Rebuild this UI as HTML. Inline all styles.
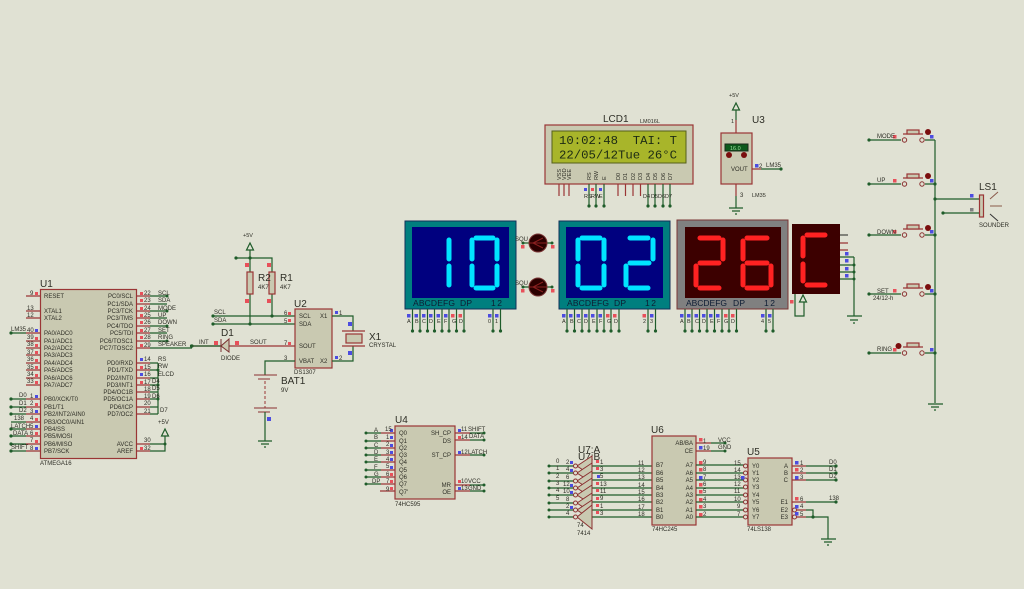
<!DOCTYPE html>
<html><head><meta charset="utf-8"><title>Schematic</title>
<style>
html,body{margin:0;padding:0;background:#e0e1d3;width:1024px;height:589px;overflow:hidden}
svg{display:block;filter:blur(.3px)}
text{font-family:"Liberation Sans",sans-serif;font-size:6px;fill:#2e2e26}
.l{font-size:10px}.s{font-size:5.500px}.m{font-size:6.500px}
.n{font-size:8.500px;fill:#0d1c33}
.w{stroke:#1f5c2a;stroke-width:1.200;fill:none}
.p{stroke:#9a3535;stroke-width:1.200;fill:none}
.b{fill:#c9c9b1;stroke:#9a3535;stroke-width:1.200}
.d{fill:#1f5c2a}
.r{fill:#e8505a}.u{fill:#4c4ce0}
.c{stroke:#00e4ff;stroke-width:5;stroke-linecap:round;fill:none}
.e{stroke:#ff2222;stroke-width:5;stroke-linecap:round;fill:none}
</style></head><body>
<svg width="1024" height="589" viewBox="0 0 1024 589" xmlns="http://www.w3.org/2000/svg">
<rect width="1024" height="589" fill="#e0e1d3"/>

<!-- U1 -->
<text class="l" x="40" y="287">U1</text>
<rect class="b" x="40.500" y="289.500" width="96" height="169"/>
<path class="p" d="M26 296H40M26 311H40M26 318H40M26 341H40M26 348H40M26 355H40M26 363H40M26 370H40M26 378H40M26 385H40M26 333H40M26 399H40M26 407H40M26 414H40M26 422H40M26 429H40M26 436H40M26 444H40M26 451H40"/>
<path class="p" d="M136 296H150M136 304H150M136 311H150M136 318H150M136 326H150M136 333H150M136 341H150M136 348H150M136 363H150M136 370H150M136 378H150M136 385H150M136 392H150M136 399H150M136 407H150M136 414H150M136 444H150M136 451H150"/>
<path class="w" d="M11 333H26M11 399H26M11 407H26M11 414H26M11 422H26M11 429H26M11 436H26M11 444H26M11 451H26"/>
<path class="w" d="M150 296H167M150 304H167M150 311H167M150 318H167M150 326H167M150 333H167M150 341H167M150 348H192M150 363H158M150 370H158M150 378H158M150 385H158M150 392H158M150 399H158M150 407H158M150 414H158M158 363V414M150 444H165V436M150 451H165V444"/>
<path class="w" d="M165 436l-3.500 0 3.500-7 3.500 7z"/>
<g class="d"><circle cx="11" cy="333" r="1.600"/><circle cx="11" cy="399" r="1.600"/><circle cx="11" cy="407" r="1.600"/><circle cx="11" cy="414" r="1.600"/><circle cx="11" cy="429" r="1.600"/><circle cx="11" cy="436" r="1.600"/><circle cx="11" cy="444" r="1.600"/><circle cx="11" cy="451" r="1.600"/><circle cx="167" cy="296" r="1.500"/><circle cx="167" cy="311" r="1.500"/><circle cx="167" cy="326" r="1.500"/><circle cx="167" cy="341" r="1.500"/><circle cx="192" cy="346" r="1.600"/><circle cx="158" cy="370" r="1.500"/><circle cx="158" cy="385" r="1.500"/><circle cx="158" cy="399" r="1.500"/><circle cx="165" cy="444" r="1.500"/></g>
<g class="r"><rect x="35" y="292" width="3" height="3"/><rect x="35" y="337" width="3" height="3"/><rect x="35" y="344" width="3" height="3"/><rect x="35" y="351" width="3" height="3"/><rect x="35" y="359" width="3" height="3"/><rect x="35" y="366" width="3" height="3"/><rect x="35" y="374" width="3" height="3"/><rect x="35" y="381" width="3" height="3"/><rect x="35" y="403" width="3" height="3"/><rect x="35" y="418" width="3" height="3"/><rect x="35" y="432" width="3" height="3"/><rect x="35" y="440" width="3" height="3"/><rect x="140" y="292" width="3" height="3"/><rect x="140" y="299" width="3" height="3"/><rect x="140" y="307" width="3" height="3"/><rect x="140" y="314" width="3" height="3"/><rect x="140" y="321" width="3" height="3"/><rect x="140" y="329" width="3" height="3"/><rect x="140" y="336" width="3" height="3"/><rect x="140" y="344" width="3" height="3"/><rect x="140" y="366" width="3" height="3"/><rect x="140" y="381" width="3" height="3"/><rect x="140" y="447" width="3" height="3"/></g>
<g class="u"><rect x="35" y="329" width="3" height="3"/><rect x="35" y="395" width="3" height="3"/><rect x="35" y="410" width="3" height="3"/><rect x="35" y="425" width="3" height="3"/><rect x="35" y="447" width="3" height="3"/><rect x="140" y="358" width="3" height="3"/><rect x="140" y="373" width="3" height="3"/></g>
<text x="44" y="298">RESET</text><text x="44" y="313">XTAL1</text><text x="44" y="320">XTAL2</text><text x="44" y="335">PA0/ADC0</text><text x="44" y="343">PA1/ADC1</text><text x="44" y="350">PA2/ADC2</text><text x="44" y="357">PA3/ADC3</text><text x="44" y="365">PA4/ADC4</text><text x="44" y="372">PA5/ADC5</text><text x="44" y="380">PA6/ADC6</text><text x="44" y="387">PA7/ADC7</text><text x="44" y="401">PB0/XCK/T0</text><text x="44" y="409">PB1/T1</text><text x="44" y="416">PB2/INT2/AIN0</text><text x="44" y="424">PB3/OC0/AIN1</text><text x="44" y="431">PB4/SS</text><text x="44" y="438">PB5/MOSI</text><text x="44" y="446">PB6/MISO</text><text x="44" y="453">PB7/SCK</text>
<g text-anchor="end"><text x="133" y="298">PC0/SCL</text><text x="133" y="306">PC1/SDA</text><text x="133" y="313">PC3/TCK</text><text x="133" y="320">PC3/TMS</text><text x="133" y="328">PC4/TDO</text><text x="133" y="335">PC5/TDI</text><text x="133" y="343">PC6/TOSC1</text><text x="133" y="350">PC7/TOSC2</text><text x="133" y="365">PD0/RXD</text><text x="133" y="372">PD1/TXD</text><text x="133" y="380">PD2/INT0</text><text x="133" y="387">PD3/INT1</text><text x="133" y="394">PD4/OC1B</text><text x="133" y="401">PD5/OC1A</text><text x="133" y="409">PD6/ICP</text><text x="133" y="416">PD7/OC2</text><text x="133" y="446">AVCC</text><text x="133" y="453">AREF</text></g>
<g><text x="30" y="295">9</text><text x="27" y="310">13</text><text x="27" y="317">12</text><text x="27" y="332">40</text><text x="27" y="339">39</text><text x="27" y="346">38</text><text x="27" y="354">37</text><text x="27" y="361">36</text><text x="27" y="369">35</text><text x="27" y="376">34</text><text x="27" y="383">33</text><text x="30" y="398">1</text><text x="30" y="405">2</text><text x="30" y="413">3</text><text x="30" y="420">4</text><text x="30" y="428">5</text><text x="30" y="435">6</text><text x="30" y="442">7</text><text x="30" y="450">8</text>
<text x="144" y="295">22</text><text x="144" y="302">23</text><text x="144" y="310">24</text><text x="144" y="317">25</text><text x="144" y="324">26</text><text x="144" y="332">27</text><text x="144" y="339">28</text><text x="144" y="347">29</text><text x="144" y="361">14</text><text x="144" y="369">15</text><text x="144" y="376">16</text><text x="144" y="384">17</text><text x="144" y="391">18</text><text x="144" y="398">19</text><text x="144" y="405">20</text><text x="144" y="413">21</text><text x="144" y="442">30</text><text x="144" y="450">32</text></g>
<text x="11" y="331">LM35</text><text x="19" y="397">D0</text><text x="19" y="405">D1</text><text x="19" y="412">D2</text><text x="14" y="420">138</text><text x="11" y="428">LATCH</text><text x="13" y="435">DATA</text><text x="11" y="449">SHIFT</text>
<text x="158" y="295">SCL</text><text x="158" y="302">SDA</text><text x="158" y="310">MODE</text><text x="158" y="317">UP</text><text x="158" y="324">DOWN</text><text x="158" y="332">SET</text><text x="158" y="339">RING</text><text x="158" y="346">SPEAKER</text><text x="158" y="361">RS</text><text x="158" y="368">RW</text><text x="158" y="376">ELCD</text><text x="152" y="383">D4</text><text x="152" y="390">D5</text><text x="152" y="398">D6</text><text x="160" y="412">D7</text><text x="158" y="424">+5V</text>
<text x="40" y="465">ATMEGA16</text>

<!-- U2 area -->
<text class="s" x="243" y="237">+5V</text>
<path class="w" d="M250 250l-3.500 0 3.500-7 3.500 7zM250 250V324M236 258H272V316M213 316H295M213 324H295"/>
<g class="d"><circle cx="236" cy="258" r="1.600"/><circle cx="250" cy="258" r="1.600"/><circle cx="272" cy="316" r="1.600"/><circle cx="250" cy="324" r="1.600"/><circle cx="213" cy="316" r="1.600"/><circle cx="213" cy="324" r="1.600"/><circle cx="191.500" cy="346" r="1.600"/></g>
<rect class="b" x="247" y="272" width="6" height="22"/><rect class="b" x="269" y="272" width="6" height="22"/>
<g class="r"><rect x="245" y="263" width="4" height="4"/><rect x="267" y="263" width="4" height="4"/><rect x="245" y="299" width="4" height="4"/><rect x="267" y="299" width="4" height="4"/><rect x="214" y="341" width="4" height="4"/><rect x="235" y="341" width="4" height="4"/><rect x="288" y="312" width="3" height="3"/><rect x="288" y="319" width="3" height="3"/><rect x="288" y="342" width="3" height="3"/></g>
<text class="l" x="258" y="281">R2</text><text class="l" x="280" y="281">R1</text><text x="258" y="289">4K7</text><text x="280" y="289">4K7</text>
<text class="l" x="294" y="307">U2</text>
<rect class="b" x="295" y="309" width="37" height="59"/>
<path class="p" d="M230 346H295M192 346H221M229 346H240"/>
<path class="w" d="M192 346H221M295 361H265V375M332 316H353V331M332 361H353V346"/>
<path d="M221 339V352M229 339V352L221 346Z" fill="#c9c9b1" stroke="#7a3030"/>
<text class="l" x="221" y="336">D1</text><text x="221" y="360">DIODE</text><text x="199" y="344">INT</text><text x="250" y="344">SOUT</text>
<text x="299" y="318">SCL</text><text x="299" y="326">SDA</text><text x="299" y="348">SOUT</text><text x="299" y="363">VBAT</text><text x="320" y="318">X1</text><text x="320" y="363">X2</text>
<text x="284" y="315">6</text><text x="284" y="323">5</text><text x="284" y="345">7</text><text x="284" y="360">3</text><text x="339" y="315">1</text><text x="339" y="360">2</text><text x="294" y="374">DS1307</text>
<g class="u"><rect x="335" y="311" width="3" height="3"/><rect x="335" y="356" width="3" height="3"/><rect x="348" y="322" width="4" height="4"/><rect x="348" y="351" width="4" height="4"/><rect x="267" y="417" width="4" height="4"/></g>
<path class="p" d="M342 331H365M342 346H365"/><rect class="b" x="346" y="334" width="16" height="9"/>
<text class="l" x="369" y="340">X1</text><text x="369" y="347">CRYSTAL</text>
<path d="M254 375H277M258 379H270M254 408H277M258 412H270" stroke="#8a3030" fill="none"/>
<path d="M265 381V408" stroke="#9a3535" stroke-dasharray="3 2"/>
<path class="w" d="M265 412V441M258 441H272M261 444H269M264 447H266"/>
<text class="l" x="281" y="384">BAT1</text><text x="281" y="392">9V</text>
<text x="214" y="314">SCL</text><text x="214" y="322">SDA</text>

<!-- Displays -->
<rect x="405" y="221" width="111" height="88" fill="#007f7f" stroke="#12305a"/>
<rect x="412" y="227" width="97" height="71" fill="#00007f"/>
<path class="c" d="M449 240V259M449 266V285M472 240V259M472 266V285M497 240V259M497 266V285M476 238H493M476 288H493"/>
<text class="n" x="413" y="306" textLength="42">ABCDEFG</text><text class="n" x="460" y="306" textLength="12">DP</text><text class="n" x="491" y="306" textLength="11">12</text>
<rect x="559" y="221" width="111" height="88" fill="#007f7f" stroke="#12305a"/>
<rect x="566" y="227" width="97" height="71" fill="#00007f"/>
<path class="c" d="M578 240V259M578 266V285M604 240V259M604 266V285M582 238H600M582 288H600M630 238H648M653 240V259M630 263H649M626 266V285M630 288H648"/>
<text class="n" x="567" y="306" textLength="42">ABCDEFG</text><text class="n" x="614" y="306" textLength="12">DP</text><text class="n" x="645" y="306" textLength="11">12</text>
<rect x="677" y="220" width="111" height="89" fill="#808080" stroke="#7a3535"/>
<rect x="685" y="227" width="96" height="71" fill="#3c0000"/>
<path class="e" d="M700 238H719M723 240V259M700 263H719M696 266V285M700 288H719M743 241V259M743 266V285M747 238H767M747 263H767M771 266V285M747 288H767"/>
<text class="n" x="686" y="306" textLength="41">ABCDEFG</text><text class="n" x="733" y="306" textLength="12">DP</text><text class="n" x="764" y="306" textLength="11">12</text>
<rect x="792" y="224" width="48" height="70" fill="#3c0000"/>
<path class="e" d="M807 235H825M803 238V256M803 264V281M807 285H825"/>
<path class="p" d="M840 243H848M840 250H848"/><path d="M840 235H848" stroke="#222"/>
<path class="w" d="M840 257H854M840 265H854M840 272H854M840 279H854M854 257V316M847 316H862M850 320H858M853 323H855M795 294V316H804V302"/>
<path class="w" d="M803 302h-3.500l3.500-7 3.500 7z"/>
<g class="d"><circle cx="854" cy="265" r="1.500"/><circle cx="854" cy="272" r="1.500"/><circle cx="854" cy="279" r="1.500"/></g>
<g class="u"><rect x="845" y="252" width="3.500" height="3.500"/><rect x="845" y="259" width="3.500" height="3.500"/><rect x="845" y="267" width="3.500" height="3.500"/><rect x="845" y="274" width="3.500" height="3.500"/></g>
<rect class="r" x="790" y="300" width="3.500" height="3.500"/>
<!-- Display pins -->
<path class="w" d="M412.500 309V331M420 309V331M427.500 309V331M434.500 309V331M442 309V331M449 309V331M456.500 309V331M464 309V331M493 309V331M500.500 309V331M567 309V331M574.500 309V331M582 309V331M589 309V331M597 309V331M604 309V331M611 309V331M619 309V331M648 309V331M655.500 309V331M685 309V331M692 309V331M699.500 309V331M707 309V331M714.500 309V331M722 309V331M729 309V331M736.500 309V331M766 309V331M773 309V331"/>
<g class="d"><circle cx="412.500" cy="331" r="1.600"/><circle cx="420" cy="331" r="1.600"/><circle cx="427.500" cy="331" r="1.600"/><circle cx="434.500" cy="331" r="1.600"/><circle cx="442" cy="331" r="1.600"/><circle cx="449" cy="331" r="1.600"/><circle cx="456.500" cy="331" r="1.600"/><circle cx="464" cy="331" r="1.600"/><circle cx="493" cy="331" r="1.600"/><circle cx="500.500" cy="331" r="1.600"/><circle cx="567" cy="331" r="1.600"/><circle cx="574.500" cy="331" r="1.600"/><circle cx="582" cy="331" r="1.600"/><circle cx="589" cy="331" r="1.600"/><circle cx="597" cy="331" r="1.600"/><circle cx="604" cy="331" r="1.600"/><circle cx="611" cy="331" r="1.600"/><circle cx="619" cy="331" r="1.600"/><circle cx="648" cy="331" r="1.600"/><circle cx="655.500" cy="331" r="1.600"/><circle cx="685" cy="331" r="1.600"/><circle cx="692" cy="331" r="1.600"/><circle cx="699.500" cy="331" r="1.600"/><circle cx="707" cy="331" r="1.600"/><circle cx="714.500" cy="331" r="1.600"/><circle cx="722" cy="331" r="1.600"/><circle cx="729" cy="331" r="1.600"/><circle cx="736.500" cy="331" r="1.600"/><circle cx="766" cy="331" r="1.600"/><circle cx="773" cy="331" r="1.600"/></g>
<g class="u"><rect x="407" y="314" width="3.500" height="3.500"/><rect x="414.500" y="314" width="3.500" height="3.500"/><rect x="422" y="314" width="3.500" height="3.500"/><rect x="429" y="314" width="3.500" height="3.500"/><rect x="436.500" y="314" width="3.500" height="3.500"/><rect x="444" y="314" width="3.500" height="3.500"/><rect x="488" y="314" width="3.500" height="3.500"/><rect x="495" y="314" width="3.500" height="3.500"/><rect x="562" y="314" width="3.500" height="3.500"/><rect x="569" y="314" width="3.500" height="3.500"/><rect x="576.500" y="314" width="3.500" height="3.500"/><rect x="584" y="314" width="3.500" height="3.500"/><rect x="591" y="314" width="3.500" height="3.500"/><rect x="598.500" y="314" width="3.500" height="3.500"/><rect x="650" y="314" width="3.500" height="3.500"/><rect x="680" y="314" width="3.500" height="3.500"/><rect x="687" y="314" width="3.500" height="3.500"/><rect x="694.500" y="314" width="3.500" height="3.500"/><rect x="702" y="314" width="3.500" height="3.500"/><rect x="709" y="314" width="3.500" height="3.500"/><rect x="716" y="314" width="3.500" height="3.500"/><rect x="761" y="314" width="3.500" height="3.500"/><rect x="768" y="314" width="3.500" height="3.500"/></g>
<g class="r"><rect x="451" y="314" width="3.500" height="3.500"/><rect x="458.500" y="314" width="3.500" height="3.500"/><rect x="606" y="314" width="3.500" height="3.500"/><rect x="613" y="314" width="3.500" height="3.500"/><rect x="642.500" y="314" width="3.500" height="3.500"/><rect x="724" y="314" width="3.500" height="3.500"/><rect x="731" y="314" width="3.500" height="3.500"/></g>
<g class="s"><text class="s" x="407" y="323">A</text><text class="s" x="415" y="323">B</text><text class="s" x="422" y="323">C</text><text class="s" x="429" y="323">D</text><text class="s" x="437" y="323">E</text><text class="s" x="444" y="323">F</text><text class="s" x="452" y="323">G</text><text class="s" x="459" y="323">D</text><text class="s" x="488" y="323">0</text><text class="s" x="495" y="323">1</text><text class="s" x="562" y="323">A</text><text class="s" x="570" y="323">B</text><text class="s" x="577" y="323">C</text><text class="s" x="584" y="323">D</text><text class="s" x="592" y="323">E</text><text class="s" x="599" y="323">F</text><text class="s" x="607" y="323">G</text><text class="s" x="614" y="323">D</text><text class="s" x="643" y="323">2</text><text class="s" x="650" y="323">3</text><text class="s" x="680" y="323">A</text><text class="s" x="687" y="323">B</text><text class="s" x="695" y="323">C</text><text class="s" x="702" y="323">D</text><text class="s" x="710" y="323">E</text><text class="s" x="717" y="323">F</text><text class="s" x="724" y="323">G</text><text class="s" x="731" y="323">D</text><text class="s" x="761" y="323">4</text><text class="s" x="768" y="323">5</text></g>
<!-- Buzzer LEDs -->
<path class="w" d="M523 243H552M523 287H552"/>
<circle cx="538" cy="243" r="9" fill="#2b0000" stroke="#7a3535"/><circle cx="538" cy="287" r="9" fill="#2b0000" stroke="#7a3535"/>
<path d="M543 238L533 243L543 248M529 243H547M543 282L533 287L543 292M529 287H547" stroke="#8a2020" fill="none"/>
<g class="d"><circle cx="523" cy="243" r="1.500"/><circle cx="552" cy="243" r="1.500"/><circle cx="523" cy="287" r="1.500"/><circle cx="552" cy="287" r="1.500"/></g>
<g class="r"><rect x="521" y="245" width="3.500" height="3.500"/><rect x="551" y="245" width="3.500" height="3.500"/><rect x="521" y="289" width="3.500" height="3.500"/><rect x="551" y="289" width="3.500" height="3.500"/></g>
<text x="515" y="241">SQU</text><text x="515" y="285">SQU</text>

<!-- LCD -->
<text class="l" x="603" y="122">LCD1</text><text class="s" x="640" y="123">LM016L</text>
<rect class="b" x="545" y="125" width="148" height="59"/>
<rect x="552" y="131" width="134" height="32" fill="#a8b52a" stroke="#55601a"/>
<text x="559" y="144" style="font-family:'Liberation Mono',monospace;font-size:12.300px;fill:#1c2a14" textLength="118" xml:space="preserve">10:02:48  TAI: T</text>
<text x="559" y="158.500" style="font-family:'Liberation Mono',monospace;font-size:12.300px;fill:#1c2a14" textLength="118" xml:space="preserve">22/05/12Tue 26°C</text>
<g class="s"><text class="s" transform="translate(561,180) rotate(-90)">VSS</text><text class="s" transform="translate(566,180) rotate(-90)">VDD</text><text class="s" transform="translate(571,180) rotate(-90)">VEE</text><text class="s" transform="translate(591,180) rotate(-90)">RS</text><text class="s" transform="translate(598,180) rotate(-90)">RW</text><text class="s" transform="translate(606,180) rotate(-90)">E</text><text class="s" transform="translate(620,180) rotate(-90)">D0</text><text class="s" transform="translate(627,180) rotate(-90)">D1</text><text class="s" transform="translate(635,180) rotate(-90)">D2</text><text class="s" transform="translate(642,180) rotate(-90)">D3</text><text class="s" transform="translate(650,180) rotate(-90)">D4</text><text class="s" transform="translate(657,180) rotate(-90)">D5</text><text class="s" transform="translate(665,180) rotate(-90)">D6</text><text class="s" transform="translate(672,180) rotate(-90)">D7</text></g>
<path class="p" d="M559 184V196M564 184V196M569 184V196M618 184V196M625.500 184V196M633 184V196M640.500 184V196"/>
<path class="w" d="M589 184V206M596 184V206M604 184V206M648 184V206M655 184V206M663 184V206M670 184V206"/>
<g class="d"><circle cx="589" cy="206" r="1.600"/><circle cx="596" cy="206" r="1.600"/><circle cx="604" cy="206" r="1.600"/><circle cx="648" cy="206" r="1.600"/><circle cx="655" cy="206" r="1.600"/><circle cx="663" cy="206" r="1.600"/><circle cx="670" cy="206" r="1.600"/></g>
<rect class="u" x="584" y="188" width="3" height="3"/><rect class="r" x="591" y="188" width="3" height="3"/><rect class="u" x="599" y="188" width="3" height="3"/>
<g class="s"><text class="s" x="584" y="198">RS</text><text class="s" x="591" y="198">RW</text><text class="s" x="599" y="198">E</text><text class="s" x="643" y="198">D4</text><text class="s" x="651" y="198">D5</text><text class="s" x="658" y="198">D6</text><text class="s" x="665" y="198">D7</text></g>

<!-- U3 -->
<text class="s" x="729" y="97">+5V</text>
<path class="w" d="M736 110h-3.500l3.500-7 3.500 7zM736 110V120"/><path class="p" d="M736 120V133"/>
<text class="l" x="752" y="123">U3</text><text class="s" x="731" y="123">1</text>
<rect class="b" x="721" y="133" width="31" height="51"/>
<rect x="725" y="144" width="23" height="7" fill="#0d5a1c" stroke="#1a2a1a"/>
<text class="s" x="730" y="150" style="fill:#9fe09f">16.0</text>
<circle cx="729" cy="155" r="3" fill="#7a0e0e"/><circle cx="744" cy="155" r="3" fill="#7a0e0e"/>
<text x="731" y="171">VOUT</text>
<path class="p" d="M752 169H761M736 184V196"/><path class="w" d="M761 169H781M736 196V208M729 208H743M732 211H740M735 214H737"/>
<circle class="d" cx="781" cy="169" r="1.600"/>
<rect class="u" x="755" y="164" width="3.500" height="3.500"/>
<text x="759" y="168">2</text><text x="766" y="167">LM35</text><text x="740" y="197">3</text><text class="s" x="752" y="197">LM35</text>

<!-- Switches -->
<path class="w" d="M935 140V403M928 404H943M931 407H939M934 410H936M869 140H901M869 184H901M869 235H901M869 294H901M869 353H901M925 140H935M925 184H935M925 235H935M925 294H935M925 353H935M935 199H979M943 213H979"/>
<g fill="#e0e1d3" stroke="#8a3030"><circle cx="904.500" cy="140" r="2.200"/><circle cx="922" cy="140" r="2.200"/><circle cx="904.500" cy="184" r="2.200"/><circle cx="922" cy="184" r="2.200"/><circle cx="904.500" cy="235" r="2.200"/><circle cx="922" cy="235" r="2.200"/><circle cx="904.500" cy="294" r="2.200"/><circle cx="922" cy="294" r="2.200"/><circle cx="904.500" cy="353" r="2.200"/><circle cx="922" cy="353" r="2.200"/></g>
<path class="p" d="M903 134H923M903 178H923M903 229H923M903 288H923M903 347H923"/>
<g class="b"><rect x="907" y="130" width="12" height="4"/><rect x="907" y="174" width="12" height="4"/><rect x="907" y="225" width="12" height="4"/><rect x="907" y="284" width="12" height="4"/><rect x="907" y="343" width="12" height="4"/></g>
<g fill="#7a0e0e"><circle cx="928" cy="132" r="3"/><circle cx="928" cy="176" r="3"/><circle cx="928" cy="228" r="3"/><circle cx="928" cy="287" r="3"/><circle cx="898.500" cy="346" r="3"/></g>
<g class="d"><circle cx="869" cy="140" r="1.600"/><circle cx="869" cy="184" r="1.600"/><circle cx="869" cy="235" r="1.600"/><circle cx="869" cy="294" r="1.600"/><circle cx="869" cy="353" r="1.600"/><circle cx="935" cy="184" r="1.600"/><circle cx="935" cy="199" r="1.600"/><circle cx="935" cy="235" r="1.600"/><circle cx="935" cy="294" r="1.600"/><circle cx="935" cy="353" r="1.600"/><circle cx="943" cy="213" r="1.600"/></g>
<g class="r"><rect x="893" y="135" width="3.500" height="3.500"/><rect x="893" y="179" width="3.500" height="3.500"/><rect x="893" y="230" width="3.500" height="3.500"/><rect x="893" y="289" width="3.500" height="3.500"/><rect x="893" y="348" width="3.500" height="3.500"/></g>
<g class="u"><rect x="930" y="135" width="3.500" height="3.500"/><rect x="930" y="179" width="3.500" height="3.500"/><rect x="930" y="230" width="3.500" height="3.500"/><rect x="930" y="289" width="3.500" height="3.500"/><rect x="930" y="348" width="3.500" height="3.500"/><rect x="970" y="194" width="3.500" height="3.500"/></g>
<rect x="970" y="208" width="3.500" height="3.500" fill="#808080"/>
<text x="877" y="138">MODE</text><text x="877" y="182">UP</text><text x="877" y="234">DOWN</text><text x="877" y="293">SET</text><text x="873" y="300">24/12-h</text><text x="877" y="351">RING</text>
<rect class="b" x="979.500" y="195" width="4" height="22"/>
<path d="M990 199L998 192M990 206H1002" stroke="#8a5a4a" fill="none"/><path d="M990 214L998 221" stroke="#333" fill="none"/>
<text class="l" x="979" y="190">LS1</text><text x="979" y="227">SOUNDER</text>

<!-- U4 -->
<text class="l" x="395" y="423">U4</text>
<rect class="b" x="395" y="426" width="60" height="73"/>
<path class="w" d="M366 433H381M366 441H381M366 448H381M366 455H381M366 462H381M366 470H381M366 477H381M366 484H381"/><path class="p" d="M381 433H395M381 441H395M381 448H395M381 455H395M381 462H395M381 470H395M381 477H395M381 484H395M380 491H395M455 433H470M455 440H470M455 455H470M455 485H470M455 491H470"/>
<path class="w" d="M470 433H484M470 440H484M470 455H484M470 485H484M470 491H484"/>
<g class="d"><circle cx="366" cy="433" r="1.500"/><circle cx="366" cy="441" r="1.500"/><circle cx="366" cy="448" r="1.500"/><circle cx="366" cy="455" r="1.500"/><circle cx="366" cy="462" r="1.500"/><circle cx="366" cy="470" r="1.500"/><circle cx="366" cy="477" r="1.500"/><circle cx="366" cy="484" r="1.500"/><circle cx="484" cy="433" r="1.500"/><circle cx="484" cy="440" r="1.500"/><circle cx="484" cy="455" r="1.500"/><circle cx="484" cy="485" r="1.500"/><circle cx="484" cy="491" r="1.500"/></g>
<g class="u"><rect x="390" y="429" width="3" height="3"/><rect x="390" y="436" width="3" height="3"/><rect x="390" y="444" width="3" height="3"/><rect x="390" y="451" width="3" height="3"/><rect x="390" y="458" width="3" height="3"/><rect x="390" y="466" width="3" height="3"/><rect x="458" y="429" width="3" height="3"/><rect x="458" y="451" width="3" height="3"/><rect x="458" y="487" width="3" height="3"/></g>
<g class="r"><rect x="390" y="473" width="3" height="3"/><rect x="390" y="480" width="3" height="3"/><rect x="390" y="487" width="3" height="3"/><rect x="458" y="436" width="3" height="3"/><rect x="458" y="480" width="3" height="3"/></g>
<text x="399" y="435">Q0</text><text x="399" y="443">Q1</text><text x="399" y="450">Q2</text><text x="399" y="457">Q3</text><text x="399" y="464">Q4</text><text x="399" y="472">Q5</text><text x="399" y="479">Q6</text><text x="399" y="486">Q7</text><text x="399" y="494">Q7'</text>
<g text-anchor="end"><text x="451" y="435">SH_CP</text><text x="451" y="443">DS</text><text x="451" y="457">ST_CP</text><text x="451" y="487">MR</text><text x="451" y="494">OE</text></g>
<text x="374" y="432">A</text><text x="374" y="439">B</text><text x="374" y="447">C</text><text x="374" y="454">D</text><text x="374" y="461">E</text><text x="374" y="469">F</text><text x="374" y="476">G</text><text x="372" y="483">DP</text>
<text x="385" y="431">15</text><text x="386" y="439">1</text><text x="386" y="446">2</text><text x="386" y="454">3</text><text x="386" y="461">4</text><text x="386" y="468">5</text><text x="386" y="476">6</text><text x="386" y="483">7</text><text x="386" y="491">9</text>
<text x="461" y="431">11</text><text x="461" y="439">14</text><text x="461" y="454">12</text><text x="461" y="483">10</text><text x="461" y="490">13</text>
<text x="468" y="431">SHIFT</text><text x="469" y="438">DATA</text><text x="468" y="454">LATCH</text><text x="468" y="483">VCC</text><text x="468" y="490">GND</text>
<text x="395" y="506">74HC595</text>

<!-- U7 -->
<text class="l" x="578" y="453">U7:A</text><text class="l" x="578" y="460">U7:B</text>
<path class="w" d="M549 466H574M549 473H574M549 481H574M549 488H574M549 495H574M549 503H574M549 510H574M549 517H574M592 466H652M592 473H652M592 480H652M592 488H652M592 495H652M592 502H652M592 510H652M592 517H652"/>
<g class="d"><circle cx="549" cy="466" r="1.500"/><circle cx="549" cy="473" r="1.500"/><circle cx="549" cy="481" r="1.500"/><circle cx="549" cy="488" r="1.500"/><circle cx="549" cy="495" r="1.500"/><circle cx="549" cy="503" r="1.500"/><circle cx="549" cy="510" r="1.500"/><circle cx="549" cy="517" r="1.500"/></g>
<g fill="#c9c9b1" stroke="#8a3030"><path d="M577 466L592 456V476Z"/><path d="M577 473L592 463V483Z"/><path d="M577 481L592 471V491Z"/><path d="M577 488L592 478V498Z"/><path d="M577 495L592 485V505Z"/><path d="M577 503L592 493V513Z"/><path d="M577 510L592 500V520Z"/><path d="M577 517L592 505V529Z"/></g>
<g fill="#e0e1d3" stroke="#8a3030"><circle cx="575.500" cy="466" r="2"/><circle cx="575.500" cy="473" r="2"/><circle cx="575.500" cy="481" r="2"/><circle cx="575.500" cy="488" r="2"/><circle cx="575.500" cy="495" r="2"/><circle cx="575.500" cy="503" r="2"/><circle cx="575.500" cy="510" r="2"/><circle cx="575.500" cy="517" r="2"/></g>
<text x="556" y="463">0</text><text x="556" y="470">1</text><text x="556" y="478">2</text><text x="556" y="485">3</text><text x="556" y="492">4</text><text x="556" y="500">5</text>
<text x="566" y="464">2</text><text x="566" y="471">4</text><text x="566" y="479">6</text><text x="563" y="486">12</text><text x="563" y="493">10</text><text x="566" y="501">8</text><text x="566" y="508">2</text><text x="566" y="515">4</text>
<g class="u"><rect x="570" y="461" width="3" height="3"/><rect x="570" y="469" width="3" height="3"/><rect x="570" y="484" width="3" height="3"/><rect x="570" y="491" width="3" height="3"/><rect x="570" y="506" width="3" height="3"/><rect x="597" y="475" width="3" height="3"/></g>
<g class="r"><rect x="596" y="460" width="3" height="3"/><rect x="596" y="467" width="3" height="3"/><rect x="596" y="482" width="3" height="3"/><rect x="596" y="489" width="3" height="3"/><rect x="596" y="497" width="3" height="3"/><rect x="596" y="504" width="3" height="3"/><rect x="596" y="511" width="3" height="3"/></g>
<text x="600" y="464">1</text><text x="600" y="471">3</text><text x="600" y="478">5</text><text x="600" y="486">13</text><text x="600" y="493">11</text><text x="600" y="500">9</text><text x="600" y="508">1</text><text x="600" y="515">3</text>
<text x="577" y="527">74</text><text x="577" y="535">7414</text>

<!-- U6 -->
<text class="l" x="651" y="433">U6</text>
<rect class="b" x="652" y="436" width="44" height="89"/>
<path class="p" d="M696 443H711M696 451H711"/><path class="w" d="M711 443H725M711 451H725M696 465H746M696 473H746M696 480H746M696 488H746M696 495H746M696 502H746M696 510H746M696 517H746"/>
<circle class="d" cx="725" cy="443" r="1.500"/><circle class="d" cx="725" cy="451" r="1.500"/>
<g class="r"><rect x="699" y="438" width="3.500" height="3.500"/><rect x="699" y="461" width="3.500" height="3.500"/><rect x="699" y="468" width="3.500" height="3.500"/><rect x="699" y="483" width="3.500" height="3.500"/><rect x="699" y="490" width="3.500" height="3.500"/><rect x="699" y="498" width="3.500" height="3.500"/><rect x="699" y="505" width="3.500" height="3.500"/><rect x="699" y="513" width="3.500" height="3.500"/></g>
<g class="u"><rect x="699" y="446" width="3.500" height="3.500"/><rect x="699" y="476" width="3.500" height="3.500"/></g>
<text x="656" y="467">B7</text><text x="656" y="475">B6</text><text x="656" y="482">B5</text><text x="656" y="490">B4</text><text x="656" y="497">B3</text><text x="656" y="504">B2</text><text x="656" y="512">B1</text><text x="656" y="519">B0</text>
<g text-anchor="end"><text x="693" y="445">AB/BA</text><text x="693" y="453">CE</text><text x="693" y="467">A7</text><text x="693" y="475">A6</text><text x="693" y="482">A5</text><text x="693" y="490">A4</text><text x="693" y="497">A3</text><text x="693" y="504">A2</text><text x="693" y="512">A1</text><text x="693" y="519">A0</text></g>
<text x="703" y="443">1</text><text x="703" y="450">19</text><text x="703" y="464">9</text><text x="703" y="471">8</text><text x="703" y="479">7</text><text x="703" y="486">6</text><text x="703" y="493">5</text><text x="703" y="501">4</text><text x="703" y="508">3</text><text x="703" y="516">2</text>
<text x="718" y="442">VCC</text><text x="718" y="449">GND</text>
<text x="638" y="465">11</text><text x="638" y="472">12</text><text x="638" y="479">13</text><text x="638" y="487">14</text><text x="638" y="494">15</text><text x="638" y="501">16</text><text x="638" y="509">17</text><text x="638" y="516">18</text>
<text x="652" y="531">74HC245</text>

<!-- U5 -->
<text class="l" x="747" y="455">U5</text>
<rect class="b" x="748" y="458" width="44" height="67"/>
<g fill="#e0e1d3" stroke="#8a3030"><circle cx="745.500" cy="466" r="2"/><circle cx="745.500" cy="473" r="2"/><circle cx="745.500" cy="480" r="2"/><circle cx="745.500" cy="487" r="2"/><circle cx="745.500" cy="495" r="2"/><circle cx="745.500" cy="502" r="2"/><circle cx="745.500" cy="510" r="2"/><circle cx="745.500" cy="517" r="2"/><circle cx="794.500" cy="510" r="2"/><circle cx="794.500" cy="517" r="2"/></g>
<text x="752" y="468">Y0</text><text x="752" y="475">Y1</text><text x="752" y="482">Y2</text><text x="752" y="489">Y3</text><text x="752" y="497">Y4</text><text x="752" y="504">Y5</text><text x="752" y="512">Y6</text><text x="752" y="519">Y7</text>
<g text-anchor="end"><text x="788" y="468">A</text><text x="788" y="475">B</text><text x="788" y="482">C</text><text x="788" y="504">E1</text><text x="788" y="512">E2</text><text x="788" y="519">E3</text></g>
<path class="p" d="M792 466H806M792 473H806M792 480H806M792 502H806M796 510H806M796 517H806"/>
<path class="w" d="M806 466H836M806 473H836M806 480H836M806 502H836M806 510H813V517M806 517H828V539M821 539H836M824 542H832M827 545H829"/>
<g class="d"><circle cx="836" cy="466" r="1.600"/><circle cx="836" cy="473" r="1.600"/><circle cx="836" cy="480" r="1.600"/><circle cx="836" cy="502" r="1.600"/><circle cx="813" cy="517" r="1.600"/></g>
<g class="u"><rect x="795" y="461" width="3.500" height="3.500"/><rect x="795" y="476" width="3.500" height="3.500"/><rect x="795" y="505" width="3.500" height="3.500"/><rect x="795" y="512" width="3.500" height="3.500"/><rect x="741" y="476" width="3.500" height="3.500"/></g>
<g class="r"><rect x="795" y="468" width="3.500" height="3.500"/><rect x="795" y="497" width="3.500" height="3.500"/></g>
<text x="800" y="465">1</text><text x="800" y="472">2</text><text x="800" y="479">3</text><text x="800" y="501">6</text><text x="800" y="508">4</text><text x="800" y="516">5</text>
<text x="734" y="465">15</text><text x="734" y="472">14</text><text x="734" y="479">13</text><text x="734" y="486">12</text><text x="734" y="493">11</text><text x="734" y="501">10</text><text x="737" y="508">9</text><text x="737" y="516">7</text>
<text x="829" y="464">D0</text><text x="829" y="471">D1</text><text x="829" y="478">D2</text><text x="829" y="500">138</text>
<text x="747" y="531">74LS138</text>
</svg>
</body></html>
